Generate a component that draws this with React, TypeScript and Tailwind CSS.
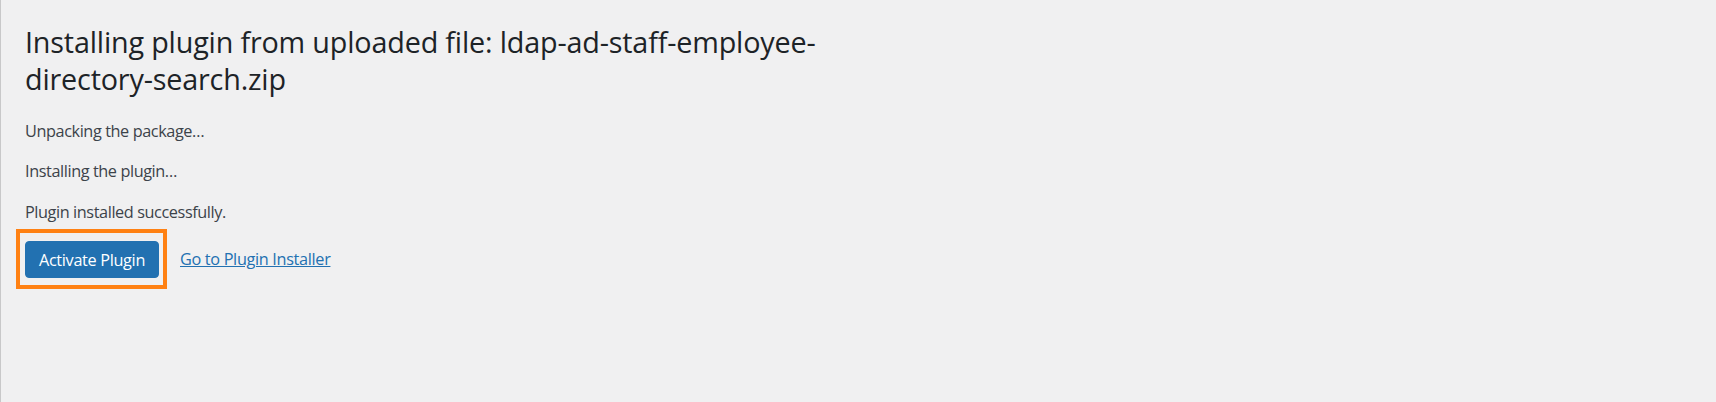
export default function App(): JSX.Element {
  return (
    <div className="h-[402px] w-full overflow-hidden border-l border-[#c8c8c9] bg-[#f0f0f1] pl-[24px] pt-[23px] font-['Open_Sans',sans-serif] text-[#3c434a]">
      <h1 className="text-[28.75px] leading-[37.4px] font-normal tracking-[-0.006em] text-[#1d2327]">
        Installing plugin from uploaded file: ldap-ad-staff-employee-
        <br />
        directory-search.zip
      </h1>
      <div className="mt-[21px] space-y-[16px] text-[16.25px] leading-[24.4px] tracking-[-0.025em]">
        <p>Unpacking the package&hellip;</p>
        <p>Installing the plugin&hellip;</p>
        <p>Plugin installed successfully.</p>
      </div>
      <div className="mt-[5.3px] flex items-center">
        <div className="-ml-[9px] border-4 border-[#ff8113] pt-[8px] pr-[4px] pb-[7px] pl-[5px]">
          <a
            href="#"
            className="flex h-[37px] w-[134px] items-center justify-center rounded-[4px] border border-[#2271b1] bg-[#2271b1] text-[16.25px] tracking-[-0.02em] text-white"
          >
            Activate Plugin
          </a>
        </div>
        <a
          href="#"
          className="ml-[13px] text-[16.25px] leading-[24.4px] tracking-[-0.02em] text-[#2271b1] underline"
        >
          Go to Plugin Installer
        </a>
      </div>
    </div>
  );
}
